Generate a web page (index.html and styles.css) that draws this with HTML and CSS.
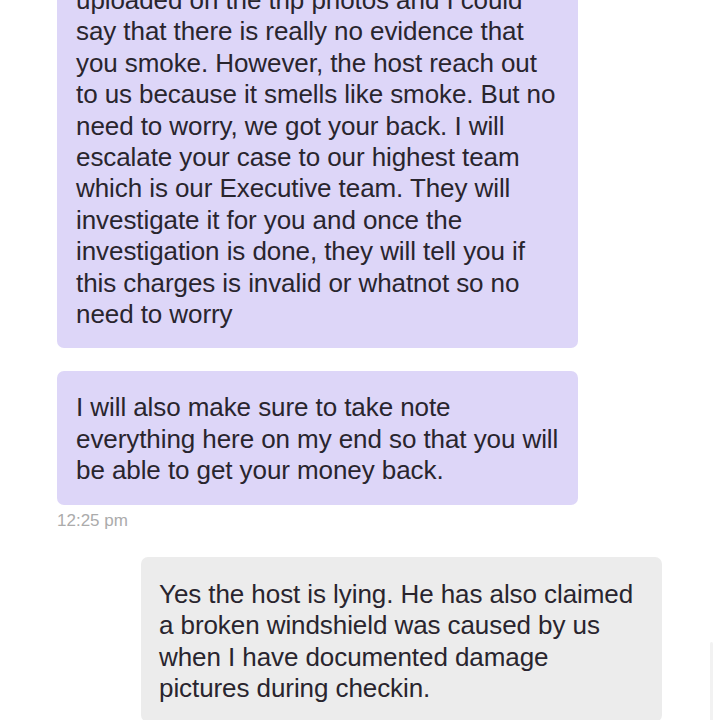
FILE: index.html
```html
<!DOCTYPE html>
<html lang="en">
<head>
<meta charset="utf-8">
<title>Chat</title>
<link rel="stylesheet" href="styles.css">
</head>
<body>
<main class="chat">
  <div class="msg msg-in">
    <div class="bubble bubble-in">uploaded on the trip photos and I could say that there is really no evidence that you smoke. However, the host reach out to us because it smells like smoke. But no need to worry, we got your back. I will escalate your case to our highest team which is our Executive team. They will investigate it for you and once the investigation is done, they will tell you if this charges is invalid or whatnot so no need to worry</div>
  </div>
  <div class="msg msg-in">
    <div class="bubble bubble-in">I will also make sure to take note everything here on my end so that you will be able to get your money back.</div>
    <div class="time">12:25 pm</div>
  </div>
  <div class="msg msg-out">
    <div class="bubble bubble-out">Yes the host is lying. He has also claimed a broken windshield was caused by us when I have documented damage pictures during checkin.</div>
  </div>
</main>
<div class="scrollbar"></div>
</body>
</html>
```
FILE: styles.css
```css
html, body {
  margin: 0;
  padding: 0;
  background: #ffffff;
  overflow: hidden;
}
body {
  width: 720px;
  height: 720px;
  position: relative;
  font-family: "Liberation Sans", Arial, sans-serif;
  color: #29252e;
}
.chat {
  display: flex;
  flex-direction: column;
  gap: 23px;
  padding: 0 57px;
  margin-top: -36px;
}
.msg {
  display: flex;
  flex-direction: column;
}
.msg-in {
  align-items: flex-start;
}
.msg-out {
  align-items: flex-end;
  margin-top: 3px;
}
.bubble {
  box-sizing: border-box;
  width: 521px;
  padding: 21px 18px 18px 19px;
  border-radius: 7px;
  font-size: 26px;
  line-height: 31.4px;
  letter-spacing: -0.08px;
}
.bubble-in {
  background: #ddd6f8;
}
.bubble-out {
  background: #ececec;
  margin-right: 1px;
  padding-top: 22px;
  padding-left: 18px;
  padding-right: 19px;
}
.time {
  margin-top: 6px;
  font-size: 17px;
  line-height: 20px;
  color: #ababab;
}
.scrollbar {
  position: absolute;
  right: 7px;
  top: 642px;
  width: 3px;
  height: 100px;
  border-radius: 2px;
  background: #f2f2f2;
}
```
